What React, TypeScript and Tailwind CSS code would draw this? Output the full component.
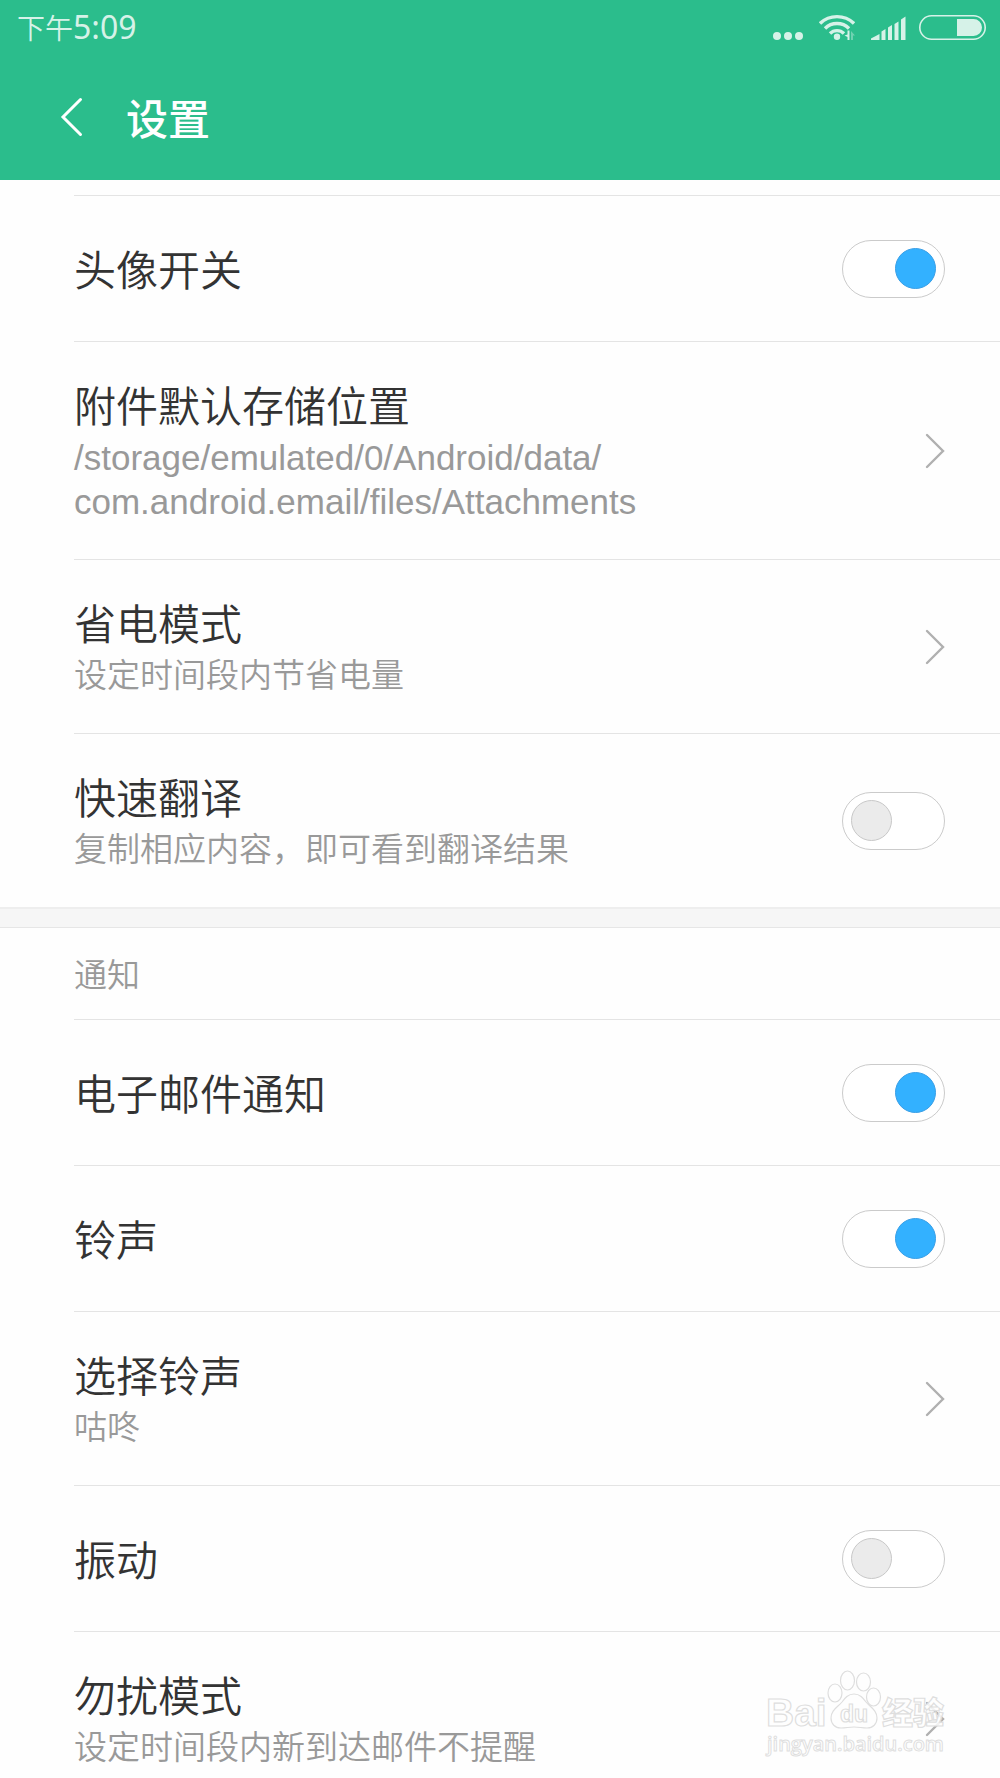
import React, { useState } from 'react';

interface SettingItem {
  id: string;
  title: string;
  summary?: string[];
  type: 'switch' | 'link';
  value?: boolean;
}

const generalItems: SettingItem[] = [
  { id: 'avatar', title: '头像开关', type: 'switch', value: true },
  {
    id: 'storage',
    title: '附件默认存储位置',
    summary: ['/storage/emulated/0/Android/data/', 'com.android.email/files/Attachments'],
    type: 'link',
  },
  { id: 'power', title: '省电模式', summary: ['设定时间段内节省电量'], type: 'link' },
  { id: 'translate', title: '快速翻译', summary: ['复制相应内容，即可看到翻译结果'], type: 'switch', value: false },
];

const noticeItems: SettingItem[] = [
  { id: 'mail', title: '电子邮件通知', type: 'switch', value: true },
  { id: 'ring', title: '铃声', type: 'switch', value: true },
  { id: 'ringtone', title: '选择铃声', summary: ['咕咚'], type: 'link' },
  { id: 'vibrate', title: '振动', type: 'switch', value: false },
  { id: 'dnd', title: '勿扰模式', summary: ['设定时间段内新到达邮件不提醒'], type: 'link' },
];

const StatusBar: React.FC = () => (
  <div className="flex h-[54px] items-center justify-between pl-[17px] pr-[14px] text-[#d6f2e8]">
    <div className="flex items-baseline font-['Noto_Sans','Noto_Sans_CJK_SC',sans-serif]">
      <span className="text-[28px] font-[350]">下午</span>
      <span className="text-[32px]">5:09</span>
    </div>
    <div className="flex items-end">
      <svg className="mr-4" width="30" height="8" viewBox="0 0 30 8" fill="currentColor">
        <circle cx="4" cy="4" r="4" />
        <circle cx="15" cy="4" r="4" />
        <circle cx="26" cy="4" r="4" />
      </svg>
      {/* wifi */}
      <svg className="mr-4" width="36" height="26" viewBox="0 0 36 26" fill="none">
        <g stroke="currentColor" strokeWidth="3.400">
          <path d="M1 9.500 A24.500 24.500 0 0 1 35 9.500" />
          <path d="M6 14.500 A17 17 0 0 1 30 14.500" />
          <path d="M11 19.500 A10 10 0 0 1 25 19.500" />
        </g>
        <circle cx="18" cy="22.800" r="3.200" fill="currentColor" />
        <path d="M30.500 16.500V26H28.500v-3l-3-1.500 3-1v-4z" fill="currentColor" />
        <path d="M32 26v-9l4 4.500h-2V26z" fill="currentColor" opacity="0.4" />
      </svg>
      {/* 信号 */}
      <svg className="mr-[13px]" width="35" height="24" viewBox="0 0 35 24" fill="currentColor">
        <path d="M0 24v-1.500L8.500 18v6z" />
        <path d="M10.500 24v-8.500l4-2.500v11z" />
        <path d="M17 24V11.500l4-2.500v15z" />
        <path d="M23.500 24V8l4-2.500V24z" />
        <path d="M30 24V3.500L34.500.5V24z" />
      </svg>
      {/* 电池 */}
      <svg width="67" height="25" viewBox="0 0 67 25" fill="none">
        <rect x="0.800" y="0.800" width="65.400" height="23.400" rx="11.700" stroke="currentColor" strokeWidth="1.600" />
        <path d="M38 4h16.500a8.500 8.500 0 0 1 0 17H38z" fill="currentColor" />
      </svg>
    </div>
  </div>
);

const ChevronRight: React.FC = () => (
  <svg className="mr-[55px] shrink-0" width="20" height="36" viewBox="0 0 20 36" fill="none" stroke="#b0b0b0" strokeWidth="2.400" strokeLinecap="round">
    <path d="M2 2l16 16L2 34" />
  </svg>
);

const RowText: React.FC<{ item: SettingItem }> = ({ item }) => (
  <span className="block pt-1.5">
    <span className="block text-[42px] font-[350] leading-[49px] text-[#333]">{item.title}</span>
    {item.summary && (
      <span className="mt-1 block font-[350] text-[#999]">
        {item.summary.map((line) => (
          <span
            key={line}
            className={`block leading-[44px] ${item.id === 'storage' ? 'text-[35px]' : 'text-[33px]'}`}
          >
            {line}
          </span>
        ))}
      </span>
    )}
  </span>
);

const SettingRow: React.FC<{ item: SettingItem }> = ({ item }) => {
  const [checked, setChecked] = useState(!!item.value);
  const rowClass =
    'flex min-h-[146px] w-full items-center justify-between border-t border-[#e4e4e4] py-[35px] text-left';

  if (item.type === 'link') {
    return (
      <button type="button" className={rowClass}>
        <RowText item={item} />
        <ChevronRight />
      </button>
    );
  }

  return (
    <label htmlFor={item.id} className={rowClass}>
      <RowText item={item} />
      <input
        id={item.id}
        type="checkbox"
        checked={checked}
        onChange={(e) => setChecked(e.target.checked)}
        className="mr-[55px] flex h-[58px] w-[103px] shrink-0 appearance-none items-center rounded-full border border-[#cbcbcb] bg-white before:ml-2 before:block before:size-[41px] before:rounded-full before:border before:border-[#c8c8c8] before:bg-[#ebebeb] checked:before:ml-[52px] checked:before:border-[#3a9fe6] checked:before:bg-[#33b1ff]"
      />
    </label>
  );
};

const Watermark: React.FC = () => (
  <svg
    className="pointer-events-none absolute bottom-0 right-0"
    width="260"
    height="128"
    viewBox="0 0 260 128"
    fill="#fefefe"
    fillOpacity="0.850"
    stroke="#dedede"
    strokeWidth="1.200"
  >
    <text x="26" y="76" fontFamily="Liberation Sans, sans-serif" fontWeight="700" fontSize="39">Bai</text>
    <ellipse cx="95" cy="43" rx="7" ry="9" />
    <ellipse cx="107.500" cy="30.500" rx="7" ry="9.500" />
    <ellipse cx="123.500" cy="32" rx="7" ry="9" />
    <ellipse cx="133.500" cy="47" rx="7" ry="9" />
    <path d="M114 44c6 0 9 4 12 8 4 5 11 8 11 16 0 6-4 10-10 10-5 0-8-1-13-1s-8 1-13 1c-6 0-10-4-10-10 0-8 7-11 11-16 3-4 6-8 12-8z" />
    <text x="100" y="72" fontFamily="Liberation Sans, sans-serif" fontWeight="700" fontSize="23">du</text>
    <text x="142" y="74" fontFamily="Noto Sans CJK SC, sans-serif" fontWeight="900" fontSize="31">经验</text>
    <text x="27" y="101" fontFamily="Open Sans, sans-serif" fontWeight="600" fontSize="20" strokeWidth="1">jingyan.baidu.com</text>
  </svg>
);

const App: React.FC = () => {
  return (
    <div className="relative flex h-screen flex-col overflow-hidden bg-[#fefefe] font-['Liberation_Sans','Noto_Sans_CJK_SC',sans-serif]">
      <header className="shrink-0 bg-[#2bbd8c]">
        <StatusBar />
        <div className="flex h-[126px] items-center pl-[60px]">
          <button type="button" aria-label="返回" className="mr-[43px]">
            <svg width="23" height="40" viewBox="0 0 23 40" fill="none" stroke="#fff" strokeWidth="3" strokeLinecap="round">
              <path d="M20.500 2.500L3 20l17.500 17.500" />
            </svg>
          </button>
          <h1 className="pt-1.5 text-[42px] font-medium leading-[49px] text-white">设置</h1>
        </div>
      </header>

      <main className="min-h-0 flex-1 overflow-hidden pt-[15px]">
        <section className="pl-[74px]">
          {generalItems.map((item) => (
            <SettingRow key={item.id} item={item} />
          ))}
        </section>
        <div className="h-[21px] border-b border-t-2 border-b-[#e6e6e6] border-t-[#eee] bg-[#f6f6f6]" />
        <section className="pl-[74px]">
          <h2 className="flex h-[91px] items-center pt-1 text-[33px] font-[350] leading-[44px] text-[#999]">通知</h2>
          {noticeItems.map((item) => (
            <SettingRow key={item.id} item={item} />
          ))}
        </section>
      </main>

      <Watermark />
    </div>
  );
};

export default App;
